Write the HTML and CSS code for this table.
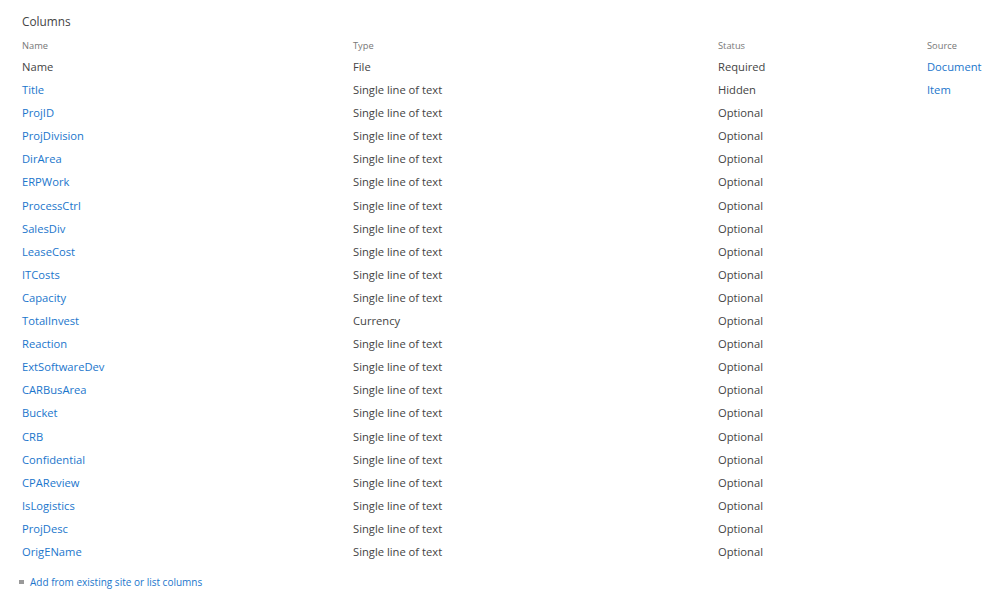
FILE: index.html
```html
<!DOCTYPE html>
<html>
<head>
<meta charset="utf-8">
<link rel="stylesheet" href="styles.css">
</head>
<body>
<div class="page">
  <div class="title">Columns</div>
  <div class="grid">
    <div class="hd">Name</div><div class="hd">Type</div><div class="hd">Status</div><div class="hd">Source</div>
    <div class="c">Name</div><div class="c">File</div><div class="c">Required</div><div class="c link">Document</div>
    <div class="c link">Title</div><div class="c">Single line of text</div><div class="c">Hidden</div><div class="c link">Item</div>
    <div class="c link">ProjID</div><div class="c">Single line of text</div><div class="c">Optional</div><div class="c"></div>
    <div class="c link">ProjDivision</div><div class="c">Single line of text</div><div class="c">Optional</div><div class="c"></div>
    <div class="c link">DirArea</div><div class="c">Single line of text</div><div class="c">Optional</div><div class="c"></div>
    <div class="c link">ERPWork</div><div class="c">Single line of text</div><div class="c">Optional</div><div class="c"></div>
    <div class="c link">ProcessCtrl</div><div class="c">Single line of text</div><div class="c">Optional</div><div class="c"></div>
    <div class="c link">SalesDiv</div><div class="c">Single line of text</div><div class="c">Optional</div><div class="c"></div>
    <div class="c link">LeaseCost</div><div class="c">Single line of text</div><div class="c">Optional</div><div class="c"></div>
    <div class="c link">ITCosts</div><div class="c">Single line of text</div><div class="c">Optional</div><div class="c"></div>
    <div class="c link">Capacity</div><div class="c">Single line of text</div><div class="c">Optional</div><div class="c"></div>
    <div class="c link">TotalInvest</div><div class="c">Currency</div><div class="c">Optional</div><div class="c"></div>
    <div class="c link">Reaction</div><div class="c">Single line of text</div><div class="c">Optional</div><div class="c"></div>
    <div class="c link">ExtSoftwareDev</div><div class="c">Single line of text</div><div class="c">Optional</div><div class="c"></div>
    <div class="c link">CARBusArea</div><div class="c">Single line of text</div><div class="c">Optional</div><div class="c"></div>
    <div class="c link">Bucket</div><div class="c">Single line of text</div><div class="c">Optional</div><div class="c"></div>
    <div class="c link">CRB</div><div class="c">Single line of text</div><div class="c">Optional</div><div class="c"></div>
    <div class="c link">Confidential</div><div class="c">Single line of text</div><div class="c">Optional</div><div class="c"></div>
    <div class="c link">CPAReview</div><div class="c">Single line of text</div><div class="c">Optional</div><div class="c"></div>
    <div class="c link">IsLogistics</div><div class="c">Single line of text</div><div class="c">Optional</div><div class="c"></div>
    <div class="c link">ProjDesc</div><div class="c">Single line of text</div><div class="c">Optional</div><div class="c"></div>
    <div class="c link">OrigEName</div><div class="c">Single line of text</div><div class="c">Optional</div><div class="c"></div>
  </div>
  <div class="add"><span class="bullet"></span><span class="addlink">Add from existing site or list columns</span></div>
</div>
</body>
</html>
```
FILE: styles.css
```css
html, body { margin: 0; padding: 0; background: #fff; }
body { font-family: "Open Sans", "Noto Sans", sans-serif; color: #444; }
.page { padding: 12px 0 0 22px; }
.title { font-size: 11.8px; line-height: 18px; color: #444; height: 18px; }
.grid { display: grid; grid-template-columns: 331px 365px 209px auto; margin-top: 8px; }
.hd { font-size: 9.3px; color: #777; line-height: 16px; height: 17px; }
.c { font-size: 11.2px; line-height: 23.1px; height: 23.1px; white-space: nowrap; color: #444; }
.c.link { color: #1b76cc; }
.add { display: flex; align-items: center; margin-top: 11px; margin-left: -3px; font-size: 10px; line-height: 16px; }
.bullet { width: 5px; height: 4px; background: #999; margin-right: 6px; }
.addlink { color: #1b76cc; }
```
